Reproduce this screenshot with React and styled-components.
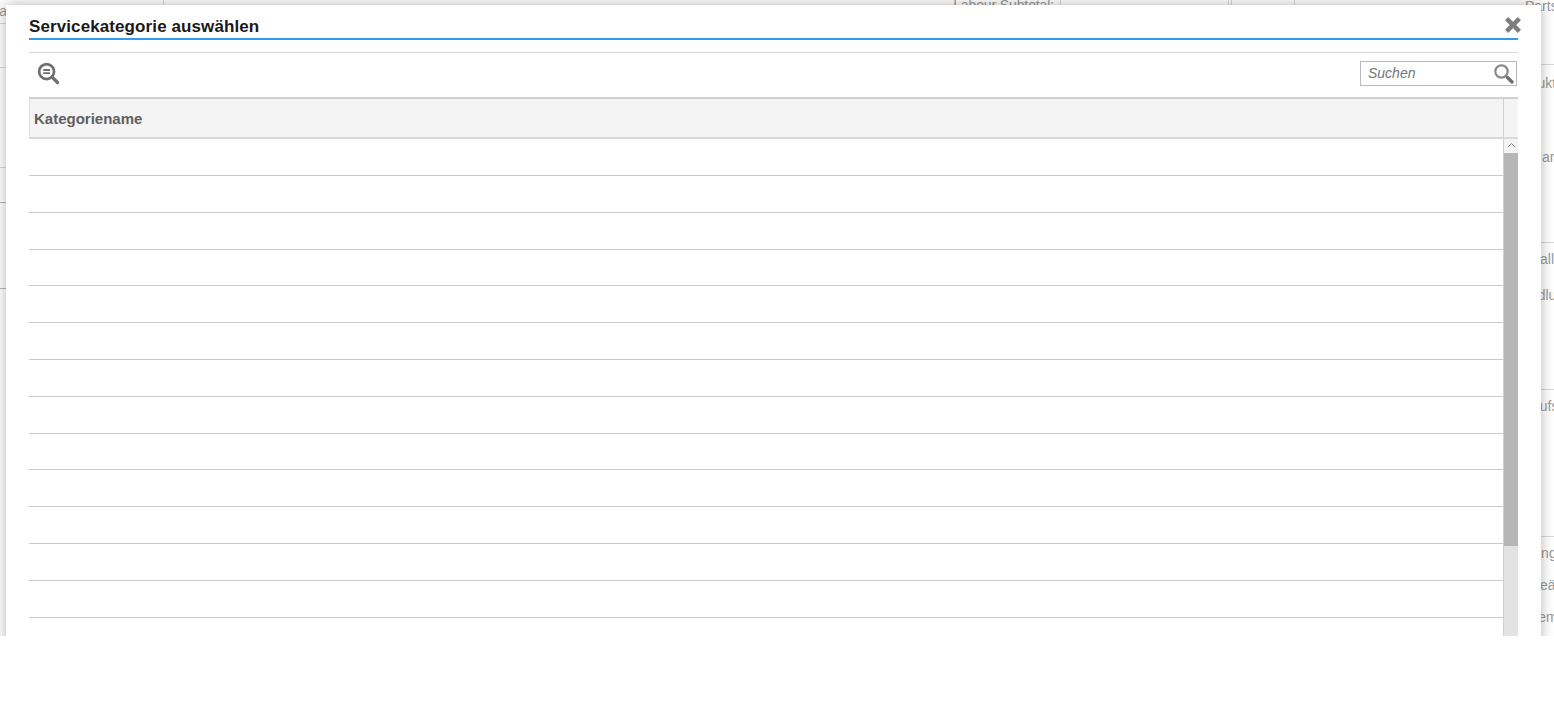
import React from "react";
import styled, { createGlobalStyle } from "styled-components";

const GlobalStyle = createGlobalStyle`
	html, body {
		margin: 0;
		padding: 0;
		background: #fff;
		font-family: "Liberation Sans", Arial, sans-serif;
	}
`;

const Page = styled.div`
	position: relative;
	height: 636px;
	overflow: hidden;
	background: #fff;
`;

const Backdrop = styled.div`
	display: flex;
	height: 100%;
	color: #999;
	font-size: 14px;
`;

const LeftPane = styled.div`
	width: 163px;
	flex: none;
	border-right: 1px solid #d8d8d8;
`;

const LeftRow = styled.div`
	height: ${props => props.$height}px;
	box-sizing: border-box;
	border-bottom: 1px solid ${props => props.$line || "#d8d8d8"};
	white-space: nowrap;
	overflow: hidden;
	line-height: 22px;
`;

const LeftText = styled.span`
	margin-left: -10px;
`;

const MiddlePane = styled.div`
	flex: 1;
	display: flex;
	height: 40px;
`;

const HeadCell = styled.div`
	width: ${props => props.$width}px;
	flex: none;
	box-sizing: border-box;
	border-right: 1px solid #d8d8d8;
	text-align: right;
	padding-right: ${props => (props.$label ? 6 : 0)}px;
	line-height: 11px;
	letter-spacing: -0.12px;
	white-space: nowrap;
`;

const RightPane = styled.div`
	width: 259px;
	flex: none;
	overflow: hidden;
`;

const RightRow = styled.div`
	height: ${props => props.$height}px;
	box-sizing: border-box;
	padding-left: ${props => props.$indent}px;
	line-height: ${props => props.$lineHeight}px;
	white-space: nowrap;
	border-bottom: ${props => (props.$line ? "1px solid #d8d8d8" : "none")};
`;

const Dialog = styled.div`
	position: absolute;
	left: 6px;
	top: 5px;
	width: 1535px;
	height: 800px;
	box-sizing: border-box;
	padding: 0 23px;
	background: #fff;
	box-shadow: 0 0 12px rgba(0, 0, 0, 0.3);
`;

const TitleBar = styled.div`
	display: flex;
	align-items: center;
	height: 35px;
	box-sizing: border-box;
	border-bottom: 2px solid #3399f3;
`;

const Title = styled.h1`
	margin: 10px 0 0;
	font-size: 17px;
	line-height: 20px;
	font-weight: bold;
	color: #1a1a1a;
	letter-spacing: 0.1px;
`;

const CloseButton = styled.button`
	position: absolute;
	top: 11px;
	right: 19px;
	width: 18px;
	height: 18px;
	padding: 0;
	border: 0;
	background: none;
`;

const Toolbar = styled.div`
	display: flex;
	align-items: flex-start;
	justify-content: space-between;
	height: 45px;
	margin-top: 12px;
	box-sizing: border-box;
	border-top: 1px solid #dcdcdc;
	padding: 8px 1px 0 8px;
`;

const ZoomButton = styled.div`
	height: 23px;
	padding-top: 1px;
`;

const SearchBox = styled.label`
	display: flex;
	align-items: flex-start;
	justify-content: space-between;
	width: 157px;
	height: 25px;
	box-sizing: border-box;
	border: 1px solid #b9b9b9;
	padding: 1px 2px 0 7px;
`;

const SearchInput = styled.input`
	width: 110px;
	height: 20px;
	border: 0;
	outline: 0;
	padding: 0;
	background: none;
	font: italic 14px "Liberation Sans", Arial, sans-serif;
	&::placeholder {
		color: #757575;
		opacity: 1;
	}
`;

const HeaderRow = styled.div`
	display: flex;
	height: 42px;
	box-sizing: border-box;
	border-top: 2px solid #d2d2d2;
	border-bottom: 2px solid #d8d8d8;
	background: #f4f4f4;
`;

const HeaderCell = styled.div`
	flex: 1;
	box-sizing: border-box;
	padding-left: 4px;
	border-left: 1px solid #dcdcdc;
	font-size: 15px;
	font-weight: bold;
	line-height: 39px;
	color: #5f5f5f;
`;

const HeaderSpacer = styled.div`
	width: 15px;
	box-sizing: border-box;
	border-left: 1px solid #d2d2d2;
`;

const TableBody = styled.div`
	display: flex;
	height: 600px;
`;

const Rows = styled.div`
	flex: 1;
	padding-top: 0.1px;
`;

const Row = styled.div`
	height: 36.82px;
	box-sizing: border-box;
	border-bottom: 1px solid #c9c9c9;
`;

const Scrollbar = styled.div`
	display: flex;
	flex-direction: column;
	width: 15px;
	box-sizing: border-box;
	border-left: 1px solid #cfcfcf;
	background: #e3e3e3;
`;

const ScrollArrow = styled.div`
	display: flex;
	align-items: center;
	justify-content: center;
	height: 14px;
	box-sizing: border-box;
	padding-bottom: 2px;
	background: #f4f4f4;
`;

const ScrollThumb = styled.div`
	height: 393px;
	background: #b6b6b6;
`;

const ZoomIcon = () => (
	<svg width="23" height="23" viewBox="0 0 24 24" fill="none">
		<circle cx="10" cy="10" r="7.8" stroke="#6f6f6f" strokeWidth="2.8" />
		<path d="M6.5 8.3h7M6.5 11.6h7" stroke="#6f6f6f" strokeWidth="2" />
		<path d="M15.8 15.8l5.6 5.6" stroke="#6f6f6f" strokeWidth="3.4" strokeLinecap="round" />
	</svg>
);

const SearchIcon = () => (
	<svg width="21" height="21" viewBox="0 0 21 21" fill="none">
		<circle cx="8.5" cy="8.5" r="6.2" stroke="#8a8a8a" strokeWidth="2.2" />
		<path d="M14.5 14.5l4.5 4.5" stroke="#6f6f6f" strokeWidth="3.4" strokeLinecap="round" />
	</svg>
);

const CloseIcon = () => (
	<svg width="18" height="18" viewBox="0 0 18 18" fill="none">
		<path d="M2.6 2.6l12.8 12.8M15.4 2.6L2.6 15.4" stroke="#7d7d7d" strokeWidth="4.4" />
	</svg>
);

const ChevronUp = () => (
	<svg width="9" height="6" viewBox="0 0 9 6" fill="none">
		<path d="M1 5l3.5-3.5L8 5" stroke="#8a8a8a" strokeWidth="1" />
	</svg>
);

const leftRows = [
	{ height: 24, text: "Par" },
	{ height: 44 },
	{ height: 100 },
	{ height: 35, line: "#b5b5b5" },
	{ height: 86, line: "#b5b5b5" },
];

const rightRows = [
	{ height: 65, indent: 230, text: "Parts", line: true, lineHeight: 13 },
	{ height: 40, indent: 213, text: "Produkt", lineHeight: 36 },
	{ height: 138, indent: 236, text: "Garantie", lineHeight: 104, line: true },
	{ height: 36, indent: 217, text: "Ausfall", lineHeight: 32 },
	{ height: 111, indent: 217, text: "Handlung", lineHeight: 32, line: true },
	{ height: 147, indent: 209, text: "Verkaufsinfo", lineHeight: 32, line: true },
	{ height: 32, indent: 215, text: "Garung", lineHeight: 32 },
	{ height: 32, indent: 234, text: "Geändert", lineHeight: 32 },
	{ height: 32, indent: 234, text: "Bemerkung", lineHeight: 32 },
];

export default function App() {
	return (
		<Page>
			<GlobalStyle />
			<Backdrop>
				<LeftPane>
					{leftRows.map((row, i) => (
						<LeftRow key={i} $height={row.height} $line={row.line}>
							{row.text && <LeftText>{row.text}</LeftText>}
						</LeftRow>
					))}
				</LeftPane>
				<MiddlePane>
					<HeadCell $width={897} $label>Labour Subtotal:</HeadCell>
					<HeadCell $width={168} />
					<HeadCell $width={3} />
					<HeadCell $width={63} />
				</MiddlePane>
				<RightPane>
					{rightRows.map((row, i) => (
						<RightRow
							key={i}
							$height={row.height}
							$indent={row.indent}
							$line={row.line}
							$lineHeight={row.lineHeight}
						>
							{row.text}
						</RightRow>
					))}
				</RightPane>
			</Backdrop>
			<Dialog>
				<TitleBar>
					<Title>Servicekategorie auswählen</Title>
				</TitleBar>
				<CloseButton aria-label="Schließen">
					<CloseIcon />
				</CloseButton>
				<Toolbar>
					<ZoomButton>
						<ZoomIcon />
					</ZoomButton>
					<SearchBox>
						<SearchInput placeholder="Suchen" />
						<SearchIcon />
					</SearchBox>
				</Toolbar>
				<HeaderRow>
					<HeaderCell>Kategoriename</HeaderCell>
					<HeaderSpacer />
				</HeaderRow>
				<TableBody>
					<Rows>
						{Array.from({ length: 16 }, (_, i) => (
							<Row key={i} />
						))}
					</Rows>
					<Scrollbar>
						<ScrollArrow>
							<ChevronUp />
						</ScrollArrow>
						<ScrollThumb />
					</Scrollbar>
				</TableBody>
			</Dialog>
		</Page>
	);
}
